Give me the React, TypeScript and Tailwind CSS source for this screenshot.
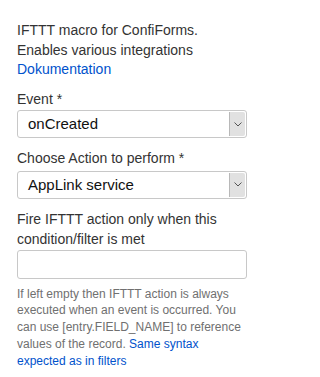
import React from "react";

function Select({ value }: { value: string }) {
  return (
    <div className="flex h-[28px] w-[230px] items-stretch rounded-[3px] border border-[#c8c8c8] bg-white">
      <div className="flex flex-1 items-center pl-[10px] text-[15px] text-[#111]">{value}</div>
      <div className="my-[1px] mr-[1px] flex w-[16px] items-center justify-center rounded-r-[2px] border-l border-[#b8b8b8] bg-[#e1e1e1]">
        <svg width="8" height="5" viewBox="0 0 8 5" fill="none">
          <path d="M0.5 0.5 L4 4 L7.5 0.5" stroke="#555" strokeWidth="1" />
        </svg>
      </div>
    </div>
  );
}

export default function App() {
  return (
    <div
      className="w-[264px] h-[377px] bg-white pl-[17px] pt-[21px] text-[14px] leading-[19.5px] text-[#333]"
      style={{ fontFamily: '"Liberation Sans", Arial, sans-serif' }}
    >
      <div>IFTTT macro for ConfiForms.</div>
      <div>Enables various integrations</div>
      <div className="text-[#0052cc]">Dokumentation</div>
      <div className="mt-[10px]">Event *</div>
      <div className="mt-[1px]">
        <Select value="onCreated" />
      </div>
      <div className="mt-[11px]">Choose Action to perform *</div>
      <div className="mt-[2px]">
        <Select value="AppLink service" />
      </div>
      <div className="mt-[10px] leading-[20px]">
        Fire IFTTT action only when this
        <br />
        condition/filter is met
      </div>
      <div className="mt-[1px] h-[29px] w-[230px] rounded-[3px] border border-[#c8c8c8] bg-white" />
      <div className="mt-[7px] w-[232px] text-[12px] leading-[16.75px] text-[#707070]">
        If left empty then IFTTT action is always executed when an event is occurred. You can use
        [entry.FIELD_NAME] to reference values of the record.{" "}
        <span className="text-[#0052cc]">Same syntax expected as in filters</span>
      </div>
    </div>
  );
}
